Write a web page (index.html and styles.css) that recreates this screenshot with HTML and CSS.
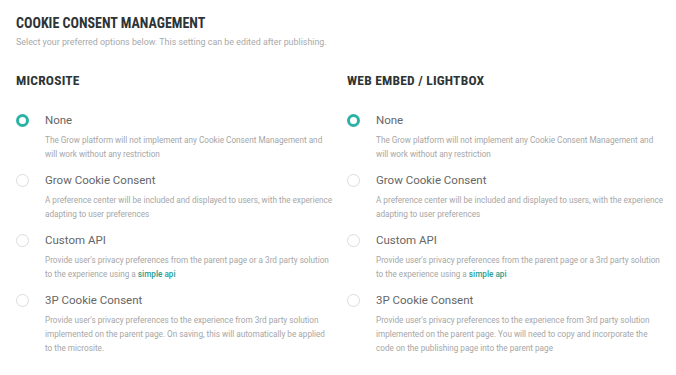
FILE: index.html
```html
<!DOCTYPE html>
<html>
<head>
<meta charset="utf-8">
<link rel="stylesheet" href="styles.css">
</head>
<body>
<div class="page">
  <h1 class="title">COOKIE CONSENT MANAGEMENT</h1>
  <p class="subtitle">Select your preferred options below. This setting can be edited after publishing.</p>
  <div class="columns">
    <section class="col">
      <h2 class="col-title">MICROSITE</h2>
      <div class="options">
        <div class="option">
          <span class="radio checked"></span>
          <div class="text">
            <div class="label">None</div>
            <div class="desc">The Grow platform will not implement any Cookie Consent Management and<br>will work without any restriction</div>
          </div>
        </div>
        <div class="option">
          <span class="radio"></span>
          <div class="text">
            <div class="label">Grow Cookie Consent</div>
            <div class="desc">A preference center will be included and displayed to users, with the experience<br>adapting to user preferences</div>
          </div>
        </div>
        <div class="option">
          <span class="radio"></span>
          <div class="text">
            <div class="label">Custom API</div>
            <div class="desc">Provide user's privacy preferences from the parent page or a 3rd party solution<br>to the experience using a <a class="link">simple api</a></div>
          </div>
        </div>
        <div class="option">
          <span class="radio"></span>
          <div class="text">
            <div class="label">3P Cookie Consent</div>
            <div class="desc">Provide user's privacy preferences to the experience from 3rd party solution<br>implemented on the parent page. On saving, this will automatically be applied<br>to the microsite.</div>
          </div>
        </div>
      </div>
    </section>
    <section class="col">
      <h2 class="col-title">WEB EMBED / LIGHTBOX</h2>
      <div class="options">
        <div class="option">
          <span class="radio checked"></span>
          <div class="text">
            <div class="label">None</div>
            <div class="desc">The Grow platform will not implement any Cookie Consent Management and<br>will work without any restriction</div>
          </div>
        </div>
        <div class="option">
          <span class="radio"></span>
          <div class="text">
            <div class="label">Grow Cookie Consent</div>
            <div class="desc">A preference center will be included and displayed to users, with the experience<br>adapting to user preferences</div>
          </div>
        </div>
        <div class="option">
          <span class="radio"></span>
          <div class="text">
            <div class="label">Custom API</div>
            <div class="desc">Provide user's privacy preferences from the parent page or a 3rd party solution<br>to the experience using a <a class="link">simple api</a></div>
          </div>
        </div>
        <div class="option">
          <span class="radio"></span>
          <div class="text">
            <div class="label">3P Cookie Consent</div>
            <div class="desc">Provide user's privacy preferences to the experience from 3rd party solution<br>implemented on the parent page. You will need to copy and incorporate the<br>code on the publishing page into the parent page</div>
          </div>
        </div>
      </div>
    </section>
  </div>
</div>
</body>
</html>
```

FILE: styles.css
```css
* { box-sizing: border-box; }
html, body { margin: 0; padding: 0; background: #fff; }
body { font-family: Roboto, "Liberation Sans", sans-serif; }
.page { padding: 15px 16px 0 16px; }
.title {
  margin: 0;
  font-family: "Roboto Condensed", "Liberation Sans Narrow", Roboto, sans-serif;
  font-stretch: condensed;
  font-weight: 700;
  font-size: 14px;
  line-height: 16px;
  color: #2e3436;
}
.subtitle {
  margin: 5px 0 0 0;
  font-size: 8.9px;
  line-height: 12px;
  color: #a9a9a9;
}
.columns {
  display: grid;
  grid-template-columns: 331px 1fr;
  margin-top: 24px;
}
.col-title {
  margin: 0;
  font-family: "Roboto Condensed", "Liberation Sans Narrow", Roboto, sans-serif;
  font-stretch: condensed;
  font-weight: 700;
  font-size: 13.5px;
  line-height: 16px;
  color: #2e3436;
  letter-spacing: 0.2px;
}
.options {
  display: flex;
  flex-direction: column;
  gap: 12px;
  margin-top: 25px;
}
.option {
  display: flex;
  align-items: flex-start;
  gap: 16px;
}
.radio {
  flex: none;
  width: 13px;
  height: 13px;
  margin-top: 1px;
  border-radius: 50%;
  border: 1px solid #dcdcdc;
  background: #fff;
}
.radio.checked {
  border: 3.5px solid #2cb3a6;
}
.text { width: 305px; }
.label {
  font-size: 11.5px;
  line-height: 14px;
  color: #666;
}
.desc {
  margin-top: 6px;
  font-size: 8.2px;
  line-height: 14px;
  color: #a6a6a6;
}
.link {
  color: #2a9d8f;
  font-weight: 500;
  text-decoration: none;
}
```
